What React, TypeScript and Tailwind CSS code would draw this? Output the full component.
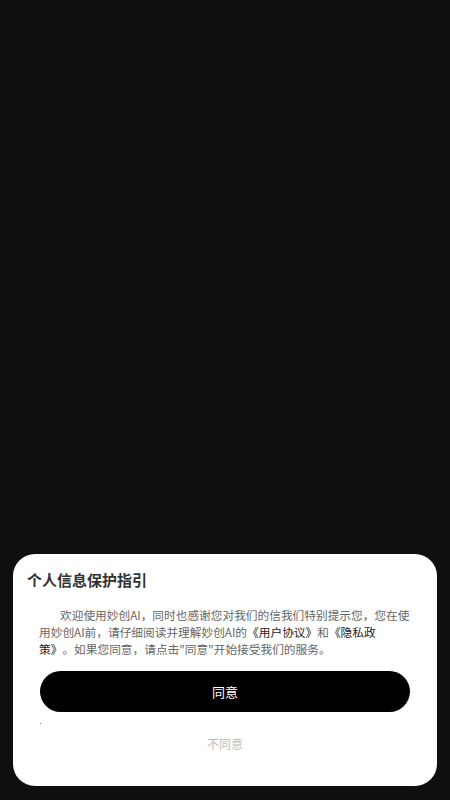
import React from 'react';

const cjk = { fontFamily: '"Noto Sans CJK SC", "Noto Sans", sans-serif' };

export default function App() {
  return (
    <div className="w-[450px] h-[800px] bg-[#0f0f0f] flex flex-col justify-end" style={cjk}>
      <div className="mx-[13px] mb-[14px] h-[232px] bg-white rounded-[22px] flex flex-col">
        <h2 className="pl-[14px] pt-[16px] text-[15px] leading-[20px] font-bold text-[#333]">个人信息保护指引</h2>

        <p className="mt-[16px] pl-[26px] pr-[27px] text-[11.7px] leading-[17px] text-[#666] indent-[21px] [text-spacing-trim:space-all]">
          欢迎使用妙创AI，同时也感谢您对我们的信我们特别提示您，您在使用妙创AI前，请仔细阅读并理解妙创AI的
          <span className="text-[#222]">《用户协议》</span>和<span className="text-[#222]">《隐私政策》</span>。如果您同意，请点击"同意"开始接受我们的服务。
        </p>

        <button className="mt-[14px] mx-[27px] h-[41px] rounded-full bg-black text-white text-[13px]">同意</button>

        <div className="ml-[27px] mt-[11px] w-px h-px bg-[#2a9d8f]" />

        <button className="mt-[12px] self-center text-[12px] leading-[16px] text-[#bbb]">不同意</button>
      </div>
    </div>
  );
}
